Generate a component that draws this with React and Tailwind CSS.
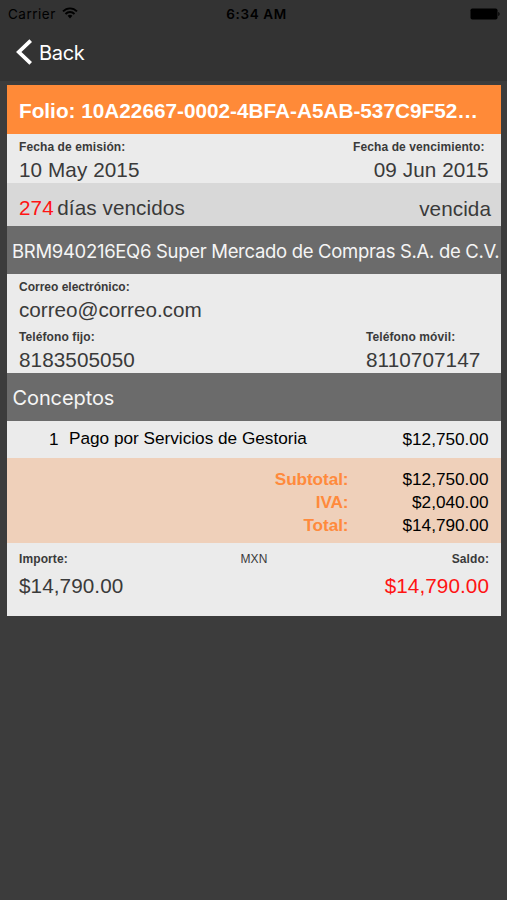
const sans = "font-['Liberation_Sans',Arial,sans-serif]";
const ui = "font-['Inter',sans-serif]";

function Label({ children, className = "" }) {
  return (
    <div className={`h-4 text-[12px] leading-4 font-bold tracking-[0.1px] text-[#3a3a3a] ${className}`}>{children}</div>
  );
}

function Value({ children, className = "" }) {
  return (
    <div className={`h-6 text-[20.7px] leading-6 tracking-[0.08px] text-[#3a3a3a] ${className}`}>{children}</div>
  );
}

function StatusBar() {
  return (
    <div className={`flex h-7 items-center justify-between pl-2 pr-[7px] text-[13.5px] leading-7 text-black ${ui}`}>
      <div className="flex w-40 items-center gap-[6px]">
        <span className="tracking-[0.5px]">Carrier</span>
        <svg className="mt-[-3px]" width="16" height="12" viewBox="0 0 16 12" fill="none" stroke="#000" strokeWidth="1.9">
          <path d="M1 4.4C5 .3 11 .3 15 4.4" />
          <path d="M3.5 7C6 4.4 10 4.4 12.5 7" />
          <path d="M5.6 8.8C7 7.5 9 7.5 10.4 8.8L8 11.4Z" fill="#000" stroke="none" />
        </svg>
      </div>
      <span className="pl-[5px] font-semibold tracking-[0.6px]">6:34 AM</span>
      <div className="flex w-40 items-center justify-end">
        <svg className="mt-[-1px]" width="30" height="12" viewBox="0 0 30 12">
          <rect x="0.5" y="0.5" width="27" height="11" rx="1.8" fill="#000" />
          <path d="M28.3 4C30 4.4 30 7.6 28.3 8Z" fill="#000" />
        </svg>
      </div>
    </div>
  );
}

function TotalRow({ label, amount }) {
  return (
    <div className="flex h-[23.1px] justify-end text-[17.2px] leading-[23px]">
      <span className="font-bold tracking-[-0.08px] text-[#ff8a3c]">{label}</span>
      <span className="w-[140px] text-right text-black">{amount}</span>
    </div>
  );
}

export default function App() {
  return (
    <div className={`h-[900px] w-[507px] overflow-hidden bg-[#3c3c3c] ${sans}`}>
      <header className="h-[81px] bg-[#333]">
        <StatusBar />
        <div className="flex h-12 items-center pl-4">
          <svg width="16" height="26" viewBox="0 0 16 26" fill="none" stroke="#fff" strokeWidth="3.8">
            <path d="M14.7 1.6L2.8 13L14.7 24.4" />
          </svg>
          <span className={`ml-[7px] pt-px text-[20px] leading-6 tracking-[-0.3px] text-white ${ui}`}>Back</span>
        </div>
      </header>

      <main className="mt-1 mr-[6px] ml-[7px] h-[531px] whitespace-nowrap bg-[#ebebeb]">
        <div className="h-[49px] bg-[#ff8a38] pl-3 text-[20.75px] leading-[52px] font-bold text-white">
          Folio: 10A22667-0002-4BFA-A5AB-537C9F52…
        </div>

        <div className="flex h-[49px] justify-between pl-3 pr-[12.5px] pt-[5px]">
          <div>
            <Label>Fecha de emisión:</Label>
            <Value className="mt-[3px]">10 May 2015</Value>
          </div>
          <div className="text-right">
            <Label className="pr-1">Fecha de vencimiento:</Label>
            <Value className="mt-[3px]">09 Jun 2015</Value>
          </div>
        </div>

        <div className="flex h-[43px] justify-between bg-[#d8d8d8] pl-3 pr-[10px] pt-[13px]">
          <Value className="flex gap-[3.5px]">
            <span className="text-[#ff1414]">274</span>
            <span>días vencidos</span>
          </Value>
          <Value className="pt-px">vencida</Value>
        </div>

        <div className={`h-12 bg-[#6b6b6b] pl-[5px] text-[18.5px] leading-[51px] tracking-[-0.31px] text-[#f5f5f5] ${ui}`}>
          BRM940216EQ6 Super Mercado de Compras S.A. de C.V.
        </div>

        <div className="h-[99px] pl-3 pt-[5px]">
          <Label className="tracking-[0px]!">Correo electrónico:</Label>
          <Value className="mt-[3px] tracking-[-0.03px]!">correo@correo.com</Value>
          <div className="mt-[7px] grid grid-cols-[347px_1fr]">
            <div>
              <Label>Teléfono fijo:</Label>
              <Value className="mt-[3px]">8183505050</Value>
            </div>
            <div>
              <Label>Teléfono móvil:</Label>
              <Value className="mt-[3px]">8110707147</Value>
            </div>
          </div>
        </div>

        <div className={`h-12 bg-[#6b6b6b] pl-[5.5px] text-[20px] leading-[50px] tracking-[-0.1px] text-[#f5f5f5] ${ui}`}>
          Conceptos
        </div>

        <div className="flex h-[37px] pl-[42px] pr-[12.5px] text-[17.2px] leading-[35px] text-black">
          <span className="w-5 pt-px">1</span>
          <span>Pago por Servicios de Gestoria</span>
          <span className="ml-auto pt-px">$12,750.00</span>
        </div>

        <div className="h-[85px] bg-[#efd0ba] pr-[12.5px] pt-[10px]">
          <TotalRow label="Subtotal:" amount="$12,750.00" />
          <TotalRow label="IVA:" amount="$2,040.00" />
          <TotalRow label="Total:" amount="$14,790.00" />
        </div>

        <div className="grid grid-cols-[1fr_auto_1fr] pl-3 pr-3 pt-[8px]">
          <Label>Importe:</Label>
          <div className="text-[12px] leading-4 tracking-[0.1px] text-[#3a3a3a]">MXN</div>
          <Label className="text-right">Saldo:</Label>
          <Value className="mt-[7px]">$14,790.00</Value>
          <span />
          <Value className="mt-[7px] text-right text-[#ff1414]!">$14,790.00</Value>
        </div>
      </main>
    </div>
  );
}
